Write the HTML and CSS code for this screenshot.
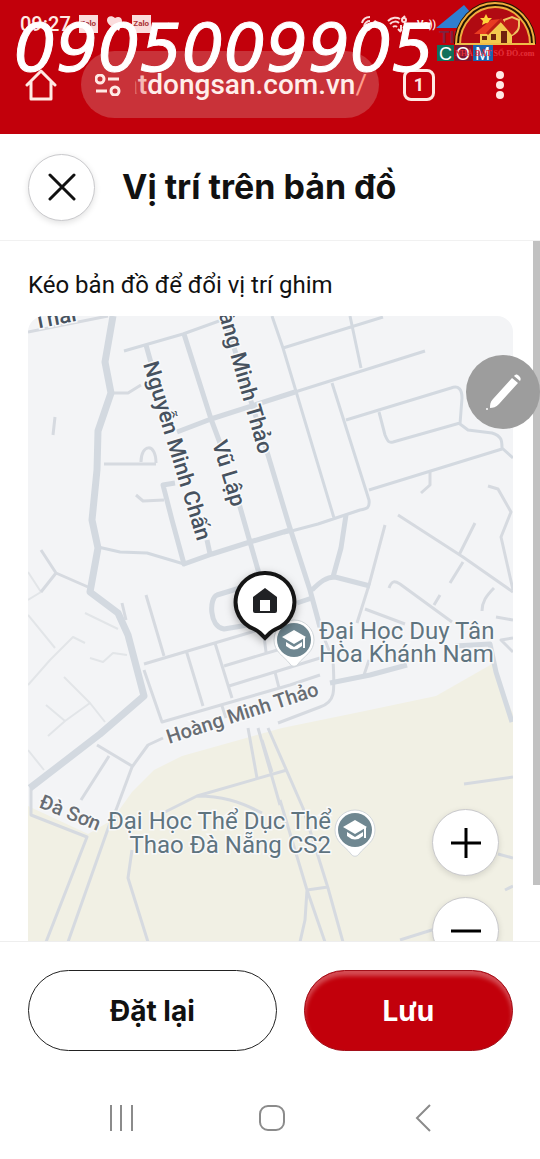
FILE: index.html
```
<!DOCTYPE html>
<html lang="vi">
<head>
    <meta charset="UTF-8">
    <meta name="viewport" content="width=device-width, initial-scale=1">
    <title>Vị trí trên bản đồ</title>
    <link rel="stylesheet" href="styles.css">
</head>
<body>
    <div class="top">
        <div class="status">
            <span class="time">09:27</span>
            <span class="zalo">Zalo</span>
            <svg class="heart" width="18" height="18" viewBox="0 0 18 18"><path d="M8 13C3 10 1 8 1 5c0-4 5-5 8-2 3-2 7-1 7 3s-3 7-8 7z" fill="#fbdcdc"/><path d="M9 12l6-2-2 6z" fill="#fff"/></svg>
            <span class="zalo">Zalo</span>
            <span class="dot">▲</span>
            <span class="space"></span>
            <svg width="18" height="16" viewBox="0 0 18 16" fill="none" stroke="#fbdcdc" stroke-width="2"><path d="M1 7c1-4 4-6 8-6M3 10c1-3 3-5 6-5"/><path d="M5 14L14 4l3 2-9 9z" fill="#fbdcdc" stroke="none"/></svg>
            <svg width="22" height="18" viewBox="0 0 22 18" fill="none" stroke="#fbdcdc" stroke-width="2"><path d="M1 6c4-4 9-4 12-2M3 9c3-3 7-3 9-1M6 12c1-1 3-1 4 0M14 10v6M11 14l3 3M18 17v-6M16 13l2-2 2 2"/><circle cx="17" cy="5" r="2"/><path d="M15 4l3-3"/></svg>
            <span class="vo">Vo))</span>
        </div>
        <div class="browser">
            <button class="icon" aria-label="Trang chủ">
                <svg width="32" height="32" viewBox="0 0 32 32" fill="none" stroke="#ffe9e4" stroke-width="3" stroke-linejoin="round" stroke-linecap="round"><path d="M2 16L16 2l14 14M6 13v17h20V13"/></svg>
            </button>
            <a class="url" href="#">
                <svg width="26" height="22" viewBox="0 0 26 22" fill="none" stroke="#ffe9e4" stroke-width="3"><circle cx="5" cy="5" r="4"/><path d="M13 5h11M1 17h11"/><circle cx="20" cy="17" r="4"/></svg>
                <span class="domain"><i>a</i><b>t</b>dongsan.com.vn<em>/</em></span>
            </a>
            <button class="icon tab" aria-label="Thẻ đang mở">1</button>
            <button class="icon menu" aria-label="Menu">
                <svg width="8" height="28" viewBox="0 0 8 28" fill="#ffe9e4"><circle cx="4" cy="4" r="4"/><circle cx="4" cy="14" r="4"/><circle cx="4" cy="24" r="4"/></svg>
            </button>
        </div>
        <div class="phone">0905009905</div>
        <div class="logo">
            <svg width="104" height="66" viewBox="436 0 104 66">
                <path d="M436 28L464 5l20 23z" fill="#2f7fd0"/>
                <text x="439" y="43" font-size="17" font-weight="bold" fill="#7d2340">TIN</text>
                <path d="M437 45h17v16h-17z" fill="#12705a"/>
                <path d="M455 45h17v16h-17z" fill="#7b1530"/>
                <path d="M473 45h20v16h-20z" fill="#1d63ad"/>
                <text x="439" y="60" font-size="18" fill="#fff">C</text>
                <text x="456" y="60" font-size="18" fill="#fff">O</text>
                <text x="475" y="60" font-size="18" fill="#fff">M</text>
                <path d="M457 44a38 40 0 0 1 76 0z" fill="#b00a12"/>
                <path d="M457 44a38 40 0 0 1 76 0" fill="none" stroke="#241300" stroke-width="6"/>
                <path d="M456 44a39 41 0 0 1 78 0M460 44a35 37 0 0 1 70 0" fill="none" stroke="#efad3e" stroke-width="2"/>
                <path d="M455 44h80" stroke="#efbd48" stroke-width="2"/>
                <path d="M486 14l2 4 4 0-3 3 1 4-4-2-4 2 1-4-3-3 4 0z" fill="#ffd43b"/>
                <path d="M504 20l8-3 7 3v6c0 4-3 7-7 9-5-2-8-5-8-9z" fill="#c21a19" stroke="#eec261" stroke-width="2"/>
                <path d="M480 43V33l20-12 12 12v10z" fill="#f2c94e"/>
                <path d="M474 34l17-14 10-1-14 15z" fill="#e83b22"/>
                <path d="M487 34l14-14 12 14" fill="none" stroke="#bd1e15" stroke-width="3"/>
                <path d="M482 36h5v4h-5zM491 34h5v6h-5zM501 31h6v12h-6z" fill="#70220e"/>
                <text class="brand" x="455" y="56" font-size="8" font-weight="bold" fill="#e5323b">NHÀ ĐẤT SỔ ĐỎ.com</text>
            </svg>
        </div>
    </div>

    <header class="head">
        <button class="round" aria-label="Đóng">
            <svg width="28" height="28" viewBox="0 0 28 28" stroke="#111" stroke-width="3" stroke-linecap="round"><path d="M2 2l24 24M26 2L2 26"/></svg>
        </button>
        <h1>Vị trí trên bản đồ</h1>
    </header>

    <main class="main">
        <p class="hint">Kéo bản đồ để đổi vị trí ghim</p>
        <div class="map">
            <svg class="canvas" viewBox="28 316 485 626" preserveAspectRatio="xMidYMin slice">
                <path d="M28 316h485v630H28z" fill="#f3f4f6"/>
                <path d="M28 806l60 28 24-14 20-28 22-22 28-14 100-28 78-16 76-16 56-32 21 50v280H28z" fill="#f1f0e4"/>
                <!-- lanes -->
                <g class="road faint">
                    <path d="M85 613l33 16M28 615l27 33M28 685l22-25 23-23 12 6M90 658l13 4 10-9 14 2M64 677l26 26 15 19M46 705l19 16-17 15M65 721l25-18M28 750l16 20M28 572l13 20-13 8"/>
                </g>
                <g class="road thin">
                    <path d="M28 332l80-16M111 393l17 0 13-8M55 417l-2 18M104 464h52M141 462c0-18 15-20 15 1M136 495l7 6 21-1"/>
                    <path d="M41 550l15 23 32 14M56 573l-15 19M122 603l4 17M146 595l18 61M144 664l101-30 40-12M144 670l18 52 128-37 30-10M186 650l17 56M215 643l17 55M224 666l60-18M229 686l91-28M264 636l2 16M275 672l4 16M222 706l4 12"/>
                    <path d="M430 472v13l-9 8M488 486l10 3 13 23-10 25 12 53M385 525l-16 60-12 38M398 515l65 42 50 35M475 523l-16 32M463 562l-13 21M389 588c3-8 6-7 11-4l52 38M440 595l-6 10M494 588c-8 8-12 14-12 23M365 609l40 15M496 617l17 3M513 638l-12 2 12 12M369 660l-5 15"/>
                    <path d="M318 623l15 37c2 34 2 42-13 47l-42 16M163 738l-15 7-16 22-16 43-6 13-42 119M97 745l35 21M109 756l-28 44M31 785v30l56 22-41 105M132 850l-4 28 20 64M165 812l32-16 90-26M197 796c24 0 42 5 65 17M248 728l9 50M258 728l22 77M268 728l35 80 25 80 15 54M272 772l-10-32M280 800l27 90 18 52M307 890l21-3M307 890l-2 30-5 22M464 784l49-7M498 854l15 4M505 890l8-4M400 940l35-11"/>
                </g>
                <g class="road mid">
                    <path d="M124 351l59-17 47-17M295 392l130-41M272 316l11 32 51 170M283 348l100-31M350 316l11 52M332 383l37 117c1 8-2 9-9 10l-42 14-34 9M346 420l105-32c8-3 11 2 11 10l-2 26 8 6 24 3c10 3 10 8 10 15l11 10M379 412l6 23c3 7 4 8 8 7l67-19M369 490l133-41M98 547l22 5 27 1 37 11"/>
                </g>
                <g class="road wide">
                    <path d="M146 345l7 25M207 540l3 14M184 334l27 85 9 24M238 500l12 42 10 35M177 432l34-13 84-27M175 483l-12 2 9 35 12 44 28-10 38-12 40-12M224 316l44 139 21 70 21 65 10 37M346 515l-5 33-8 29M312 590c8-8 14-13 23-13l35 9M297 603l15-5M330 683l40-8 37-10M455 646l35-2 6 28 16 50M240 588l-23 7c-8 3-8 32 7 34l24-4"/>
                </g>
                <path class="road main-road" d="M113 316l-8 46 6 31-13 38-1 39-5 50 6 28-8 44 28 21 10 22 16 61-44 38-70 54"/>

                <g class="street">
                    <text transform="translate(35 329) rotate(-11)">Thái</text>
                    <text transform="translate(143 364) rotate(73)">Nguyễn Minh Chấn</text>
                    <text transform="translate(212 443) rotate(73)">Vũ Lập</text>
                    <text transform="translate(259 455) rotate(74)" text-anchor="end">Hoàng Minh Thảo</text>
                    <text class="gray" transform="translate(169 744) rotate(-18)">Hoàng Minh Thảo</text>
                    <text class="gray" transform="translate(38 807) rotate(22)">Đà Sơn</text>
                </g>
                <g class="place">
                    <text x="319" y="639">Đại Học Duy Tân</text>
                    <text x="319" y="662">Hòa Khánh Nam</text>
                    <text x="331" y="829" text-anchor="end">Đại Học Thể Dục Thể</text>
                    <text x="331" y="853" text-anchor="end">Thao Đà Nẵng CS2</text>
                </g>
                <defs>
                    <g id="school">
                        <path d="M0-20a20 20 0 0 1 20 20c0 12-10 16-16 24-2 3-6 3-8 0-6-8-16-12-16-24a20 20 0 0 1 20-20z" fill="#fff" stroke="#d2d7db"/>
                        <circle r="17" fill="#6f8791"/>
                        <path d="M-12-3L0-10l12 7L0 4z" fill="#fff"/>
                        <path d="M-8 2v4q8 7 16 0V2L0 7zM9-3h2V8H9z" fill="#fff"/>
                    </g>
                </defs>
                <use href="#school" x="294" y="640"/>
                <use href="#school" x="355" y="830"/>
                <g class="pin">
                    <path d="M265 573a29 29 0 0 1 11 56q-4 2-6 4l-5 5-5-5q-2-2-6-4a29 29 0 0 1 11-56z" fill="#fff" stroke="#151515" stroke-width="4"/>
                    <path d="M265 588l12 9v14q0 2-2 2h-20q-2 0-2-2v-14z" fill="#202124"/>
                    <path d="M260 600h10v11h-10z" fill="#fff"/>
                </g>
            </svg>
            <div class="zoom">
                <button class="round" aria-label="Phóng to">
                    <svg width="30" height="30" viewBox="0 0 30 30" stroke="#000" stroke-width="3"><path d="M0 15h30M15 0v30"/></svg>
                </button>
                <button class="round" aria-label="Thu nhỏ">
                    <svg width="30" height="30" viewBox="0 0 30 30" stroke="#000" stroke-width="3"><path d="M0 15h30"/></svg>
                </button>
            </div>
        </div>
        <div class="scroll"></div>
        <button class="pen" aria-label="Chỉnh sửa">
            <svg width="38" height="38" viewBox="0 0 38 38" fill="#fff"><path d="M28 5l6 5-19 21c-3 3-6 4-9 4 0-3 0-6 3-9zM30 3c2-2 3-2 5 0s2 3 1 5z"/><circle cx="3" cy="36" r="1"/></svg>
        </button>
    </main>

    <footer class="foot">
        <button class="btn reset">Đặt lại</button>
        <button class="btn save">Lưu</button>
    </footer>
    <nav class="nav">
        <button class="icon" aria-label="Gần đây">
            <svg width="28" height="28" viewBox="0 0 28 28" stroke="#8b8b8b" stroke-width="2"><path d="M4 1v26M14 1v26M25 1v26"/></svg>
        </button>
        <button class="icon" aria-label="Màn hình chính">
            <svg width="28" height="28" viewBox="0 0 28 28" fill="none" stroke="#8b8b8b" stroke-width="2"><rect x="2" y="2" width="24" height="24" rx="8"/></svg>
        </button>
        <button class="icon" aria-label="Quay lại">
            <svg width="28" height="28" viewBox="0 0 28 28" fill="none" stroke="#8b8b8b" stroke-width="2"><path d="M21 1L8 14l13 13"/></svg>
        </button>
    </nav>
</body>
</html>
```
FILE: styles.css
```
* { box-sizing: border-box;}
body,p,h1 { margin: 0; padding: 0;}
body {
    display: flex;
    flex-direction: column;
    height: 100vh;
    overflow: hidden;
    background-color: #fff;
    color: #111;
    font-family: Roboto, "Noto Sans", sans-serif;
}
button {
    padding: 0;
    border: 0;
    background: none;
    color: inherit;
    font-family: inherit;
    cursor: pointer;
}
svg { display: block; flex: none;}
.icon {
    display: flex;
    align-items: center;
    justify-content: center;
}
.top {
    position: relative;
    padding: 12px 0 16px;
    background-color: #c2000b;
    color: #ffe9e4;
}
.status {
    display: flex;
    align-items: center;
    gap: 8px;
    height: 24px;
    padding: 0 104px 0 20px;
    margin-bottom: 15px;
}
.time {
    font-size: 20px;
    font-weight: 500;
}
.zalo {
    width: 19px;
    height: 18px;
    line-height: 18px;
    background-color: #fbdcdc;
    color: #a33;
    font-size: 8px;
    font-weight: bold;
    text-align: center;
}
.dot {
    padding-left: 6px;
    font-size: 8px;
}
.space { flex: 1;}
.vo {
    font-size: 10px;
    font-weight: bold;
}
.browser {
    display: flex;
    align-items: center;
    padding: 0 36px 0 25px;
}
.url {
    display: flex;
    flex: 1;
    align-items: center;
    gap: 14px;
    height: 67px;
    margin: 0 24px;
    padding: 0 12px 0 14px;
    border-radius: 34px;
    background-color: #c93239;
    color: #ffeeea;
    text-decoration: none;
    overflow: hidden;
}
.domain {
    display: flex;
    flex: 1;
    justify-content: flex-end;
    overflow: hidden;
    font-size: 28px;
    font-weight: 500;
    line-height: 36px;
}
.domain i {
    color: #d9656a;
    font-style: normal;
}
.domain b {
    color: #f5b9b6;
    font-weight: 500;
}
.domain em {
    color: #ff9c8c;
    font-style: normal;
    font-weight: 400;
}
.tab {
    width: 32px;
    height: 32px;
    border: 3px solid #ffe9e4;
    border-radius: 8px;
    font-size: 18px;
    font-weight: bold;
}
.menu {
    margin-left: 61px;
}
.phone {
    position: absolute;
    top: 11px;
    left: 14px;
    color: #fff;
    font: italic 66px/76px "DejaVu Sans", sans-serif;
    -webkit-text-stroke: 1px #fff;
}
.logo {
    position: absolute;
    top: 0;
    right: 0;
    font-family: "Liberation Sans", sans-serif;
}
.brand { font-family: "Liberation Serif", serif;}
.head {
    display: flex;
    align-items: center;
    gap: 27px;
    height: 107px;
    padding: 0 28px;
    border-bottom: 1px solid #f1f1f1;
}
.head h1 {
    font-family: Inter, "Noto Sans", sans-serif;
    font-size: 34px;
    font-weight: 700;
    line-height: 40px;
}
.round {
    display: flex;
    align-items: center;
    justify-content: center;
    width: 67px;
    height: 67px;
    border: 1px solid #c9c9cc;
    border-radius: 50%;
    background-color: #fff;
    box-shadow: 0 2px 6px rgba(0, 0, 0, .12);
}
.main {
    position: relative;
    display: flex;
    flex: 1;
    flex-direction: column;
    min-height: 0;
    padding: 28px 27px 0 28px;
}
.hint {
    margin-bottom: 15px;
    font-size: 24px;
    line-height: 32px;
}
.map {
    position: relative;
    flex: 1;
    min-height: 0;
    border-radius: 16px 16px 0 0;
    overflow: hidden;
}
.canvas {
    width: 100%;
    height: 100%;
}
.road {
    fill: none;
    stroke: #d3d9e0;
    stroke-linejoin: round;
}
.faint { stroke: #e2e5e8; stroke-width: 2;}
.thin { stroke: #d6dae0; stroke-width: 3;}
.mid { stroke-width: 3;}
.wide { stroke-width: 5;}
.main-road { stroke-width: 7;}
.street text {
    fill: #47525f;
    stroke: #f8f9fa;
    stroke-width: 3px;
    paint-order: stroke;
    font-size: 22px;
    font-weight: 500;
}
.street .gray {
    fill: #686d73;
    font-size: 20px;
}
.place text {
    fill: #5f747f;
    stroke: #f8f9fa;
    stroke-width: 3px;
    paint-order: stroke;
    font-size: 24px;
}
.pin { filter: drop-shadow(0 3px 4px rgba(0, 0, 0, .3));}
.zoom {
    position: absolute;
    top: 493px;
    right: 14px;
    display: grid;
    gap: 21px;
}
.scroll {
    position: absolute;
    top: 0;
    right: 0;
    width: 7px;
    height: 92%;
    background-color: #c1c1c1;
}
.pen {
    position: absolute;
    top: 114px;
    right: 0;
    display: flex;
    align-items: center;
    justify-content: center;
    width: 74px;
    height: 74px;
    border-radius: 50%;
    background-color: #9d9d9d;
}
.foot {
    display: flex;
    gap: 27px;
    padding: 28px 27px 20px 28px;
    border-top: 1px solid #eee;
}
.btn {
    flex: 25;
    height: 81px;
    border: 1px solid #222;
    border-radius: 41px;
    font-family: Inter, "Noto Sans", sans-serif;
    font-size: 28px;
    font-weight: 700;
}
.save {
    flex: 21;
    border-color: #a3101a;
    background-color: #c2000b;
    box-shadow: inset 0 5px 4px rgba(255, 255, 255, .3);
    color: #fff;
}
.nav {
    display: grid;
    grid-template-columns: repeat(3, 1fr);
    height: 88px;
    padding: 6px 42px 0 45px;
}
```
